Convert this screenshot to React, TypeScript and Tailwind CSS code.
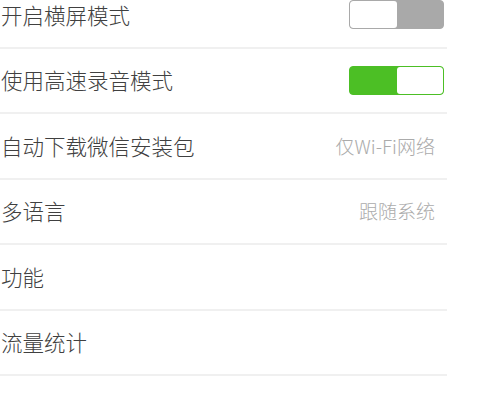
import React from 'react';

type Row = {
  label: string;
  toggle?: boolean;
  value?: string;
};

const rows: Row[] = [
  { label: '开启横屏模式', toggle: false },
  { label: '使用高速录音模式', toggle: true },
  { label: '自动下载微信安装包', value: '仅Wi-Fi网络' },
  { label: '多语言', value: '跟随系统' },
  { label: '功能' },
  { label: '流量统计' },
  { label: '' },
];

function Toggle({ on }: { on: boolean }) {
  if (on) {
    return (
      <div className="flex h-[29px] w-[95px] overflow-hidden rounded-[4px] border border-[#4cbf25] bg-[#4cbf25]">
        <div className="w-[47px]" />
        <div className="flex-1 rounded-[3px] bg-white" />
      </div>
    );
  }
  return (
    <div className="flex h-[29px] w-[95px] overflow-hidden rounded-[4px] border border-[#a9a9a9] bg-[#a9a9a9]">
      <div className="w-[47px] rounded-[3px] bg-white" />
      <div className="flex-1" />
    </div>
  );
}

export default function App() {
  return (
    <div
      className="h-[395px] w-[500px] overflow-hidden bg-white"
      style={{ fontFamily: '"Noto Sans CJK SC", "Noto Sans", sans-serif' }}
    >
      <div className="-mt-[17px] w-[447px]">
        {rows.map((row, i) => (
          <div
            key={i}
            className="flex h-[65.5px] items-center justify-between border-b-2 border-[#f0f0f0] pr-[3px]"
          >
            <span className="pl-[1px] text-[21.5px] font-light text-[#404040]">{row.label}</span>
            {row.toggle !== undefined && <Toggle on={row.toggle} />}
            {row.value && (
              <span className="pr-[9px] text-[19px] font-light text-[#ababab]">{row.value}</span>
            )}
          </div>
        ))}
      </div>
    </div>
  );
}
